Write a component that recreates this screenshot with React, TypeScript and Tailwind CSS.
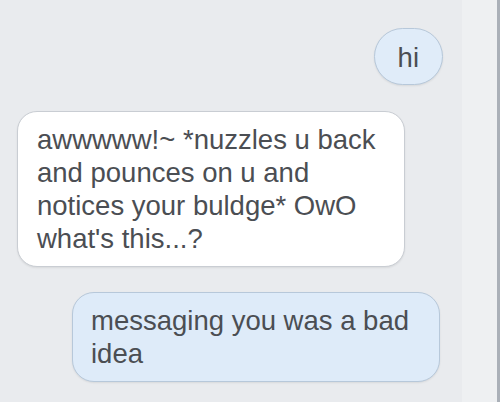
import React from "react";

export default function App() {
  const font = { fontFamily: '"Liberation Sans", Arial, sans-serif' };
  return (
    <div className="w-[500px] h-[402px] overflow-hidden flex bg-[#e9ebee]" style={font}>
      <div className="flex-1 flex flex-col pt-[28px] text-[27.5px] leading-[33px] text-[#4b4e53]">
        <div className="self-end mr-[19px] h-[57px] px-[23px] py-[12px] rounded-full bg-[#e0ecf9] border border-[#b7c8da] shadow-[0_1px_2px_rgba(0,0,0,0.08)]">
          hi
        </div>
        <div className="self-start ml-[17px] mt-[26px] w-[388px] px-[19px] py-[11px] rounded-[20px] bg-white border border-[#c9cdd3] shadow-[0_1px_2px_rgba(0,0,0,0.08)]">
          awwwww!~ *nuzzles u back
          <br />
          and pounces on u and
          <br />
          notices your buldge* OwO
          <br />
          what's this...?
        </div>
        <div className="self-end mr-[22px] mt-[25px] w-[368px] px-[18px] py-[11px] rounded-[22px] bg-[#deebf9] border border-[#b7c8da] shadow-[0_1px_2px_rgba(0,0,0,0.08)]">
          messaging you was a bad
          <br />
          idea
        </div>
      </div>
      <div className="w-[35px] h-full bg-[#eef0f2]" />
      <div className="w-[3px] h-full bg-[#aab0b8]" />
    </div>
  );
}
